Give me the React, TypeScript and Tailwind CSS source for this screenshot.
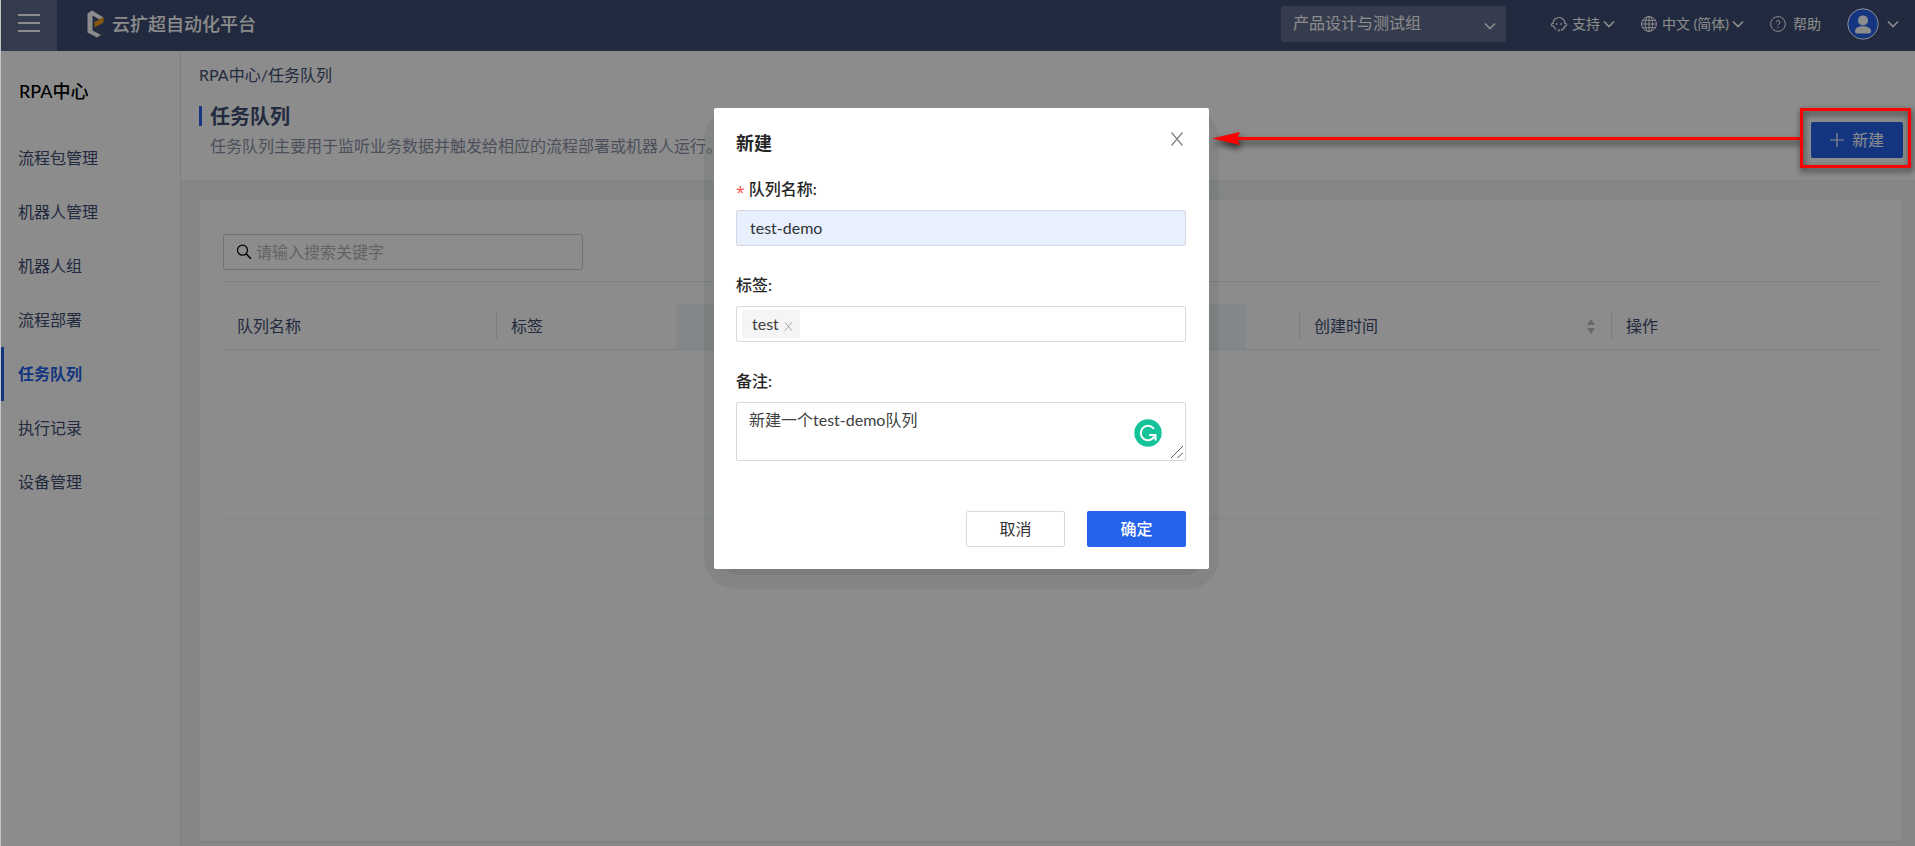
import { useState } from "react";
import type { ReactNode } from "react";

const menuItems = [
  "流程包管理",
  "机器人管理",
  "机器人组",
  "流程部署",
  "任务队列",
  "执行记录",
  "设备管理",
];

const Chevron = ({ className = "" }: { className?: string }) => (
  <svg viewBox="0 0 12 8" className={`h-2 w-3 ${className}`} fill="none" stroke="currentColor" strokeWidth="1.7">
    <path d="M1 1.5 6 6.5 11 1.5" />
  </svg>
);

const Cross = ({ className = "" }: { className?: string }) => (
  <svg viewBox="0 0 14 14" className={className} fill="none" stroke="currentColor" strokeWidth="1.2">
    <path d="M1.5 .5 12.5 13.5M12.5 .5 1.5 13.5" />
  </svg>
);

const Logo = () => (
  <svg viewBox="0 0 17 28" className="h-7 w-[17px]">
    <path fill="#fff" d="M.5 3.5 5 .5 16.5 7.5 12.5 9.5 5.5 5.5V20.5L14 25 10 27.5.5 22.5Z" />
    <path fill="#f5a31a" d="M16.5 7V12.5L7.5 17.5V12Z" />
  </svg>
);

const HeadsetIcon = () => (
  <svg viewBox="0 0 16 16" className="size-4" fill="none" stroke="currentColor" strokeWidth="1.1">
    <path d="M2 7.5a6 6 0 0 1 12 0M14 10a6 6 0 0 1-4.2 4.2" />
    <path d="M2.6 7.5H1.4a.8.8 0 0 0-.8.8v1a.8.8 0 0 0 .8.8h1.2c.5 1.5 1.2 2.3 2.4 3.1M13.4 7.5h1.2a.8.8 0 0 1 .8.8v1a.8.8 0 0 1-.8.8h-1.2" />
    <path d="M6.8 14.4h2" strokeWidth="1.8" />
    <path d="M4.8 8h1.6M9.2 8h1.6" strokeWidth="1.6" />
  </svg>
);

const GlobeIcon = () => (
  <svg viewBox="0 0 16 16" className="size-4" fill="none" stroke="currentColor" strokeWidth="1">
    <circle cx="8" cy="8" r="7.4" />
    <ellipse cx="8" cy="8" rx="3.8" ry="7.4" />
    <path d="M8 .6v14.8M.6 8h14.8M1.8 4.3h12.4M1.8 11.7h12.4" />
  </svg>
);

const HelpIcon = () => (
  <svg viewBox="0 0 16 16" className="size-4" fill="none" stroke="currentColor" strokeWidth="1">
    <circle cx="8" cy="8" r="7.4" />
    <path d="M6.1 6.4a1.9 1.9 0 1 1 2.8 1.7c-.7.4-.9.7-.9 1.5" />
    <path d="M8 10.8v1.2" />
  </svg>
);

const SearchIcon = () => (
  <svg viewBox="0 0 16 16" className="size-4 shrink-0 text-black" fill="none" stroke="currentColor" strokeWidth="1.3">
    <circle cx="6.5" cy="6.2" r="5" />
    <path d="m10 9.8 5 5" strokeWidth="1.6" />
  </svg>
);

const UserAvatar = () => (
  <svg viewBox="0 0 32 32" className="size-8">
    <circle cx="16" cy="16" r="15.2" fill="#2563eb" stroke="#fff" strokeWidth="1" />
    <circle cx="16" cy="12.4" r="5" fill="#fff" />
    <path d="M8 23.5c0-3.6 3.4-5.3 8-5.3s8 1.7 8 5.3c0 1.2-.8 2-2 2H10c-1.2 0-2-.8-2-2Z" fill="#fff" />
  </svg>
);

const Header = () => (
  <header className="flex h-[51px] items-center bg-[#3e4d73] text-white">
    <button type="button" aria-label="菜单" className="flex h-full w-14 flex-col items-center gap-1.5 bg-[#616e8e] pt-3.5">
      <span className="h-0.5 w-[22px] bg-white" />
      <span className="h-0.5 w-[22px] bg-white" />
      <span className="h-0.5 w-[22px] bg-white" />
    </button>
    <div className="ml-[30px] flex items-center gap-2 pb-1">
      <Logo />
      <span className="text-lg leading-6 font-medium">云扩超自动化平台</span>
    </div>
    <div className="ml-auto flex items-center pr-4 pb-1">
      <div className="relative mr-[45px]">
        <select aria-label="团队" className="h-9 w-[225px] appearance-none rounded-[3px] bg-[#616e8e] px-3 pb-0.5 text-base">
          <option>产品设计与测试组</option>
        </select>
        <Chevron className="pointer-events-none absolute top-4 right-2.5" />
      </div>
      <button type="button" className="mr-[26px] flex items-center text-sm">
        <HeadsetIcon />
        <span className="mr-[3px] ml-[5px]">支持</span>
        <Chevron />
      </button>
      <button type="button" className="mr-[26px] flex items-center text-sm">
        <GlobeIcon />
        <span className="mr-[3px] ml-[5px]">中文 (简体)</span>
        <Chevron />
      </button>
      <button type="button" className="mr-[26px] flex items-center gap-[7px] text-sm">
        <HelpIcon />
        帮助
      </button>
      <button type="button" aria-label="账户" className="flex items-center gap-2">
        <UserAvatar />
        <Chevron />
      </button>
    </div>
  </header>
);

const Sidebar = () => (
  <aside className="w-[180px] shrink-0 border-r border-[#e4e7ec] bg-white pt-[27px]">
    <h2 className="pl-[18px] text-lg leading-[26px] font-medium text-black">RPA中心</h2>
    <nav className="mt-[27px]">
      {menuItems.map((item) => (
        <a
          key={item}
          href="#"
          className={
            item === "任务队列"
              ? "flex h-[54px] items-center border-l-3 border-[#2563eb] pl-3.5 font-bold text-[#2563eb]"
              : "flex h-[54px] items-center pl-[17px] text-[#3e4d73]"
          }
        >
          {item}
        </a>
      ))}
    </nav>
  </aside>
);

const PageHeader = () => (
  <div className="flex h-[130px] items-start justify-between border-b border-[#edf0f4] bg-white pl-[18px] pr-3">
    <div>
      <p className="mt-3 leading-6 text-[#3e4d73]">RPA中心/任务队列</p>
      <div className="mt-[15px] flex items-center gap-2">
        <span className="h-5 w-[3px] bg-[#2563eb]" />
        <h1 className="text-xl leading-7 font-bold text-[#3e4d73]">任务队列</h1>
      </div>
      <p className="mt-1 ml-[11px] leading-6 text-[#8b93a7]">任务队列主要用于监听业务数据并触发给相应的流程部署或机器人运行。</p>
    </div>
    <button type="button" className="mt-[71px] flex h-9 w-[92px] items-center justify-center gap-2 rounded-[2px] bg-[#2563eb] text-white">
      <svg viewBox="0 0 14 14" className="size-3.5" fill="none" stroke="currentColor" strokeWidth="1.2">
        <path d="M7 0v14M0 7h14" />
      </svg>
      新建
    </button>
  </div>
);

const thClass = "relative h-[45px] border-b border-[#e8eaee] px-3.5 text-left font-normal";

const Divider = () => <span className="absolute top-[9px] right-0 h-[26px] w-px bg-[#dfe2e6]" />;

const QueueTable = () => (
  <table className="mt-[22px] w-full table-fixed border-collapse text-[#3e4d73]">
    <thead>
      <tr>
        <th className={`${thClass} w-[274px]`}>
          队列名称
          <Divider />
        </th>
        <th className={`${thClass} w-[179px]`}>标签</th>
        <th className={`${thClass} w-[570px] bg-[#f0f6fa]`} />
        <th className={`${thClass} w-[54px]`}>
          <Divider />
        </th>
        <th className={`${thClass} w-[312px]`}>
          <div className="flex items-center justify-between">
            创建时间
            <svg viewBox="0 0 8 15" className="mr-[3px] h-[15px] w-2" fill="#bfbfbf">
              <path d="M4 0 8 6H0ZM4 15 8 9H0Z" />
            </svg>
          </div>
          <Divider />
        </th>
        <th className={thClass}>操作</th>
      </tr>
    </thead>
    <tbody>
      <tr>
        <td colSpan={6} className="h-[169px] border-b border-[#f0f2f4]" />
      </tr>
    </tbody>
  </table>
);

const Field = ({ id, label, required, children }: { id: string; label: string; required?: boolean; children: ReactNode }) => (
  <div>
    <label htmlFor={id} className="mb-[9px] flex h-6 items-center gap-1 font-medium text-[#262626]">
      {required && <span className="pt-1.5 font-['Open_Sans'] text-[#ff4d4f]">*</span>}
      {label}:
    </label>
    {children}
  </div>
);

const CreateDialog = () => {
  const [name, setName] = useState("test-demo");
  const [remark, setRemark] = useState("新建一个test-demo队列");

  return (
    <div className="relative w-[495px]">
      {/* stepped shadow around the dialog */}
      <div className="absolute -inset-x-2.5 top-0 -bottom-5 rounded-[32px] bg-[#0f2f1f]/8" />
      <div className="absolute inset-x-2 top-4 -bottom-1.5 rounded-[16px] bg-black/6" />
      <div role="dialog" aria-labelledby="dialog-title" className="relative rounded-[2px] bg-white pt-[21px] pr-[23px] pb-[22px] pl-[22px]">
        <div className="mb-5 flex h-7 items-center justify-between">
          <h2 id="dialog-title" className="text-lg font-bold text-[#262626]">新建</h2>
          <button type="button" aria-label="关闭" className="mr-0.5 pb-2 text-[#7f7f7f]">
            <Cross className="size-3.5" />
          </button>
        </div>
        <form className="flex flex-col gap-[27px]">
          <Field id="name" label="队列名称" required>
            <input
              id="name"
              value={name}
              onChange={(e) => setName(e.target.value)}
              className="h-9 w-full rounded-[2px] border border-[#d4d8de] bg-[#e8f0fe] px-[13px] pb-0.5 text-[#333]"
            />
          </Field>
          <Field id="tags" label="标签">
            <div className="flex h-9 items-center rounded-[2px] border border-[#d9d9d9] px-[5px]">
              <span className="flex h-7 items-center gap-[5px] rounded-[2px] bg-[#f5f5f5] pr-[7px] pl-2.5 text-[#404040]">
                test
                <button type="button" aria-label="删除" className="pt-1 text-[#8c8c8c]">
                  <Cross className="size-[9px]" />
                </button>
              </span>
              <input id="tags" className="min-w-0 flex-1 outline-none" />
            </div>
          </Field>
          <Field id="remark" label="备注">
            <div className="relative">
              <textarea
                id="remark"
                value={remark}
                onChange={(e) => setRemark(e.target.value)}
                className="block h-[59px] w-full resize-none rounded-[2px] border border-[#d9d9d9] px-3 py-[5px] leading-6 text-[#404040]"
              />
              <svg viewBox="0 0 28 28" className="absolute top-[17px] right-6 size-7">
                <circle cx="14" cy="14" r="13.7" fill="#15c39a" />
                <path d="M19.3 9.2A7.2 7.2 0 1 0 20 18" fill="none" stroke="#fff" strokeWidth="2" strokeLinecap="round" />
                <path d="M15.2 16h6.3v5.6" fill="none" stroke="#fff" strokeWidth="2" />
              </svg>
              <svg viewBox="0 0 12 12" className="pointer-events-none absolute right-[3px] bottom-[3px] size-3" stroke="#555" strokeWidth="1">
                <path d="M0 12 12 0M6.5 12 12 6.5" />
              </svg>
            </div>
          </Field>
          <div className="mt-[23px] flex justify-end gap-[22px]">
            <button type="button" className="h-9 w-[99px] rounded-[2px] border border-[#d9d9d9] text-[#333]">取消</button>
            <button type="button" className="h-9 w-[99px] rounded-[2px] bg-[#2563eb] font-medium text-white">确定</button>
          </div>
        </form>
      </div>
    </div>
  );
};

const Callout = () => (
  <div className="pointer-events-none absolute inset-0">
    <div className="absolute top-[131px] right-[114px] left-[calc(50%+254px)] flex items-center drop-shadow-[1px_4px_3px_rgba(0,0,0,0.7)]">
      <svg viewBox="0 0 28 15" className="h-[15px] w-7" fill="#f00">
        <path d="M0 7.5 28 1 25 7.5 28 14Z" />
      </svg>
      <span className="-ml-1 h-[3px] flex-1 bg-[#f00]" />
    </div>
    <div className="absolute top-[108px] right-1 h-[60px] w-[111px] border-3 border-[#f00] drop-shadow-[1px_3px_3px_rgba(0,0,0,0.7)]" />
  </div>
);

const App = () => {
  return (
    <div className="relative flex min-h-screen flex-col bg-[#c4c4c4] pl-px font-['Lato','Noto_Sans_CJK_SC',sans-serif] text-base">
      <Header />
      <div className="flex flex-1">
        <Sidebar />
        <main className="flex min-w-0 flex-1 flex-col bg-[#f2f5f8]">
          <PageHeader />
          <section className="mt-[18px] mr-3 mb-1 ml-[18px] flex-1 border border-[#eceff3] bg-white pt-[34px] pr-6 pl-[23px]">
            <div className="border-b border-[#e8eaee] pb-[11px]">
              <label className="flex h-9 w-[360px] items-center gap-1 rounded-[2px] border border-[#d0d0d0] px-3">
                <SearchIcon />
                <input type="search" placeholder="请输入搜索关键字" className="min-w-0 flex-1 outline-none placeholder:text-[#b5b5b5]" />
              </label>
            </div>
            <QueueTable />
          </section>
        </main>
      </div>
      <div className="absolute inset-0 left-px flex items-start justify-center bg-black/45 pt-[108px] pl-[7px]">
        <CreateDialog />
      </div>
      <Callout />
    </div>
  );
};

export default App;
